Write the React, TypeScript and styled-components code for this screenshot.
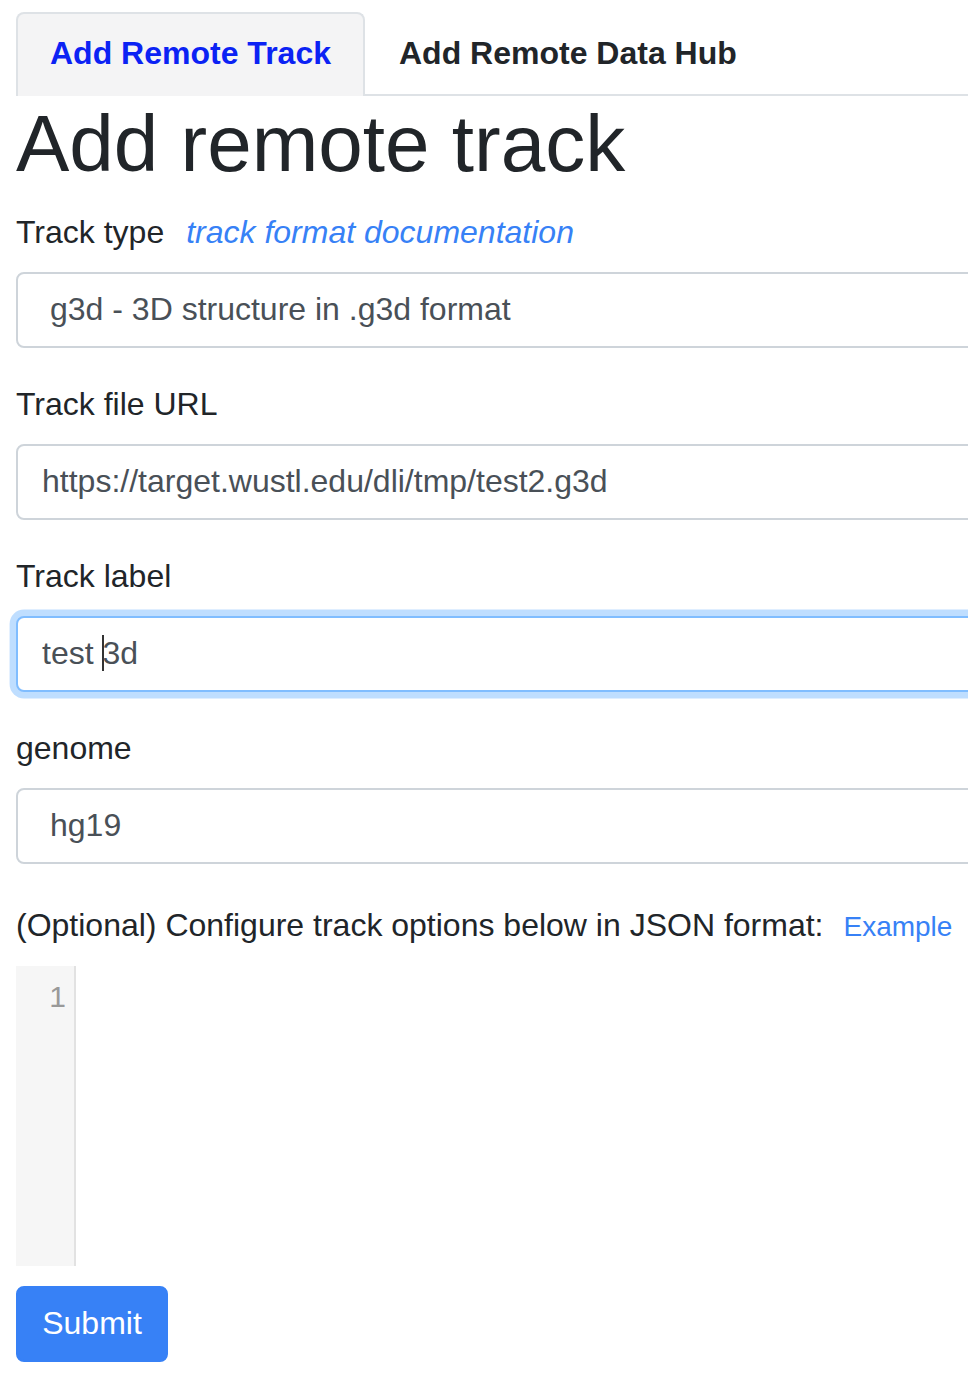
import React from "react";
import styled, { createGlobalStyle } from "styled-components";

const Global = createGlobalStyle`
  html, body {
    margin: 0;
    padding: 0;
    background: #ffffff;
    overflow: hidden;
  }
  body {
    font-family: "Liberation Sans", Arial, Helvetica, sans-serif;
    color: #212529;
    font-size: 32px;
    line-height: 1.5;
  }
`;

const Viewport = styled.div`
  width: 100%;
  overflow: hidden;
`;

const Page = styled.div`
  width: 1240px;
  padding: 12px 0 0 16px;
  box-sizing: border-box;
`;

const TabBar = styled.div`
  display: flex;
  border-bottom: 2px solid #dee2e6;
`;

const Tab = styled.div<{ $active?: boolean }>`
  padding: 15px 32px 19px;
  font-size: 32px;
  line-height: 48px;
  font-weight: 700;
  border: 2px solid ${(p) => (p.$active ? "#dee2e6" : "transparent")};
  border-bottom: none;
  border-radius: 8px 8px 0 0;
  margin-bottom: -2px;
  background: ${(p) => (p.$active ? "#f4f4f5" : "transparent")};
  color: ${(p) => (p.$active ? "#0b22f4" : "#212529")};
`;

const Title = styled.h1`
  margin: 0 0 16px 0;
  font-size: 80px;
  line-height: 96px;
  font-weight: 400;
  color: #212529;
`;

const Group = styled.div`
  margin-bottom: 32px;
`;

const Label = styled.div`
  display: flex;
  align-items: baseline;
  gap: 22px;
  font-size: 32px;
  line-height: 48px;
  margin-bottom: 16px;
  color: #212529;
`;

const DocLink = styled.span<{ $italic?: boolean; $small?: boolean }>`
  color: #3781f6;
  font-style: ${(p) => (p.$italic ? "italic" : "normal")};
  font-size: ${(p) => (p.$small ? "28px" : "32px")};
`;

const Field = styled.div<{ $focus?: boolean; $select?: boolean }>`
  box-sizing: border-box;
  height: 76px;
  padding: 11px ${(p) => (p.$select ? "32px" : "24px")} 13px;
  font-size: 32px;
  line-height: 48px;
  color: #495057;
  background: #ffffff;
  border: 2px solid ${(p) => (p.$focus ? "#80bdff" : "#ced4da")};
  border-radius: 8px;
  box-shadow: ${(p) => (p.$focus ? "0 0 0 6.4px rgba(0, 123, 255, 0.25)" : "none")};
  white-space: nowrap;
`;

const Caret = styled.span`
  display: inline-block;
  width: 0;
  height: 36px;
  border-left: 2px solid #333;
  vertical-align: -7px;
  margin-right: -2px;
`;

const OptionalLabel = styled(Label)`
  gap: 20px;
  padding-top: 5px;
  margin-bottom: 15px;
`;

const Editor = styled.div`
  display: flex;
  height: 300px;
  margin-bottom: 20px;
`;

const Gutter = styled.div`
  box-sizing: border-box;
  width: 60px;
  background: #f6f6f6;
  border-right: 2px solid #e2e2e2;
  color: #999999;
  font-size: 30px;
  line-height: 62px;
  text-align: right;
  padding: 0 8px 0 0;
`;

const Code = styled.div`
  flex: 1;
  background: #ffffff;
`;

const SubmitButton = styled.button`
  box-sizing: border-box;
  height: 76px;
  width: 152px;
  padding: 11px 24px 13px;
  font-family: "Liberation Sans", Arial, sans-serif;
  font-size: 32px;
  line-height: 48px;
  color: #ffffff;
  background: #3781f6;
  border: 2px solid #3781f6;
  border-radius: 8px;
`;

export default function App() {
  return (
    <>
      <Global />
      <Viewport>
        <Page>
          <TabBar>
            <Tab $active>Add Remote Track</Tab>
            <Tab>Add Remote Data Hub</Tab>
          </TabBar>
          <Title>Add remote track</Title>
          <Group>
            <Label>
              Track type <DocLink $italic>track format documentation</DocLink>
            </Label>
            <Field $select>g3d - 3D structure in .g3d format</Field>
          </Group>
          <Group>
            <Label>Track file URL</Label>
            <Field>https://target.wustl.edu/dli/tmp/test2.g3d</Field>
          </Group>
          <Group>
            <Label>Track label</Label>
            <Field $focus>
              test <Caret />3d
            </Field>
          </Group>
          <Group>
            <Label>genome</Label>
            <Field $select>hg19</Field>
          </Group>
          <OptionalLabel>
            (Optional) Configure track options below in JSON format:
            <DocLink $small>Example</DocLink>
          </OptionalLabel>
          <Editor>
            <Gutter>1</Gutter>
            <Code />
          </Editor>
          <SubmitButton>Submit</SubmitButton>
        </Page>
      </Viewport>
    </>
  );
}
